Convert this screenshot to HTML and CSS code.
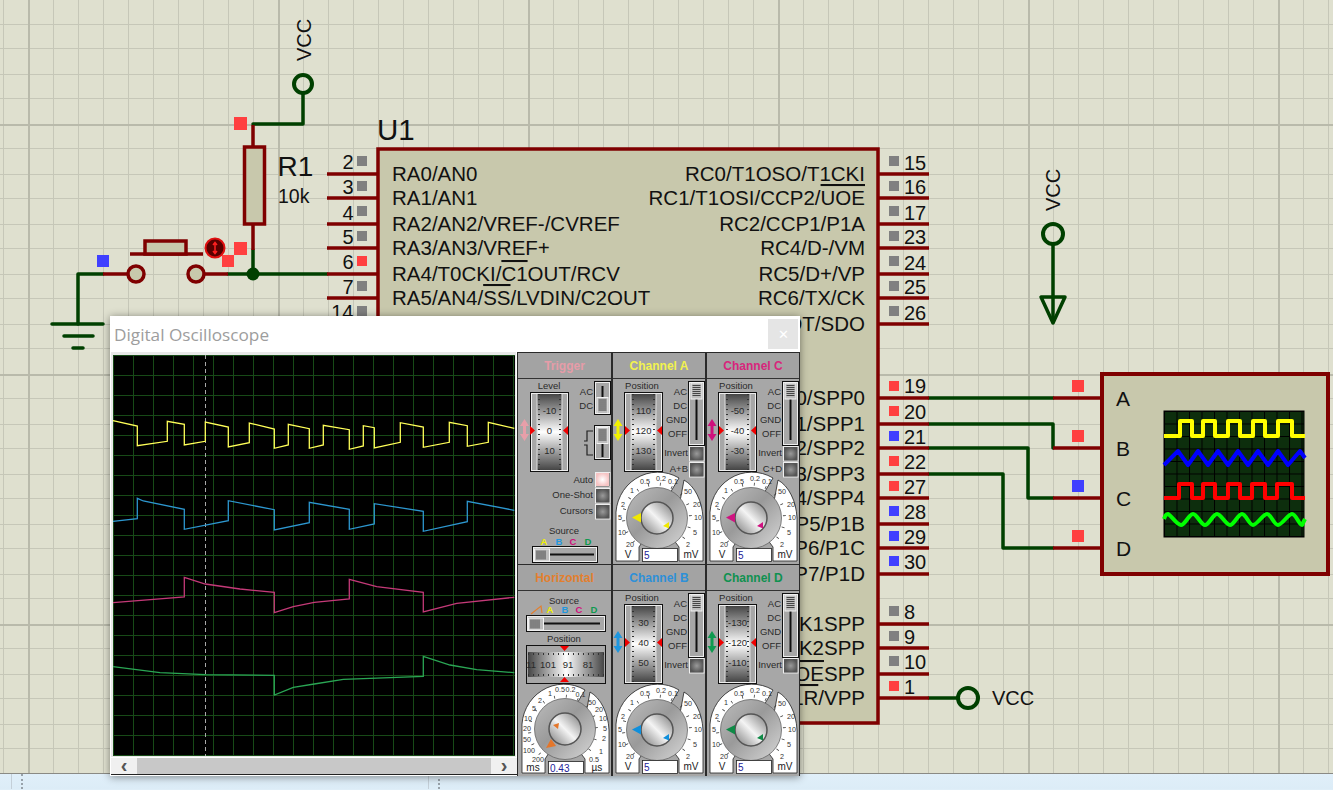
FILE: index.html
```html
<!DOCTYPE html>
<html lang="en">
<head>
<meta charset="utf-8">
<title>Digital Oscilloscope</title>
<link rel="stylesheet" href="styles.css">
</head>
<body>
<svg class="defs" aria-hidden="true">
  <defs>
    <linearGradient id="fadeV" x1="0" y1="0" x2="0" y2="1">
      <stop offset="0" stop-color="#454545"/><stop offset=".5" stop-color="#fff"/><stop offset="1" stop-color="#454545"/>
    </linearGradient>
    <linearGradient id="fadeH" x1="0" y1="0" x2="1" y2="0">
      <stop offset="0" stop-color="#454545"/><stop offset=".5" stop-color="#fff"/><stop offset="1" stop-color="#454545"/>
    </linearGradient>
    <linearGradient id="knobOuter" x1="0" y1="0" x2="1" y2="1">
      <stop offset="0" stop-color="#bdbdbd"/><stop offset=".45" stop-color="#9a9a9a"/><stop offset="1" stop-color="#d8d8d8"/>
    </linearGradient>
    <linearGradient id="knobCap" x1="0" y1="1" x2="1" y2="0">
      <stop offset="0" stop-color="#777"/><stop offset=".5" stop-color="#f4f4f4"/><stop offset="1" stop-color="#777"/>
    </linearGradient>
    <radialGradient id="btnDark">
      <stop offset="0" stop-color="#9a9a9a"/><stop offset="1" stop-color="#555"/>
    </radialGradient>
    <radialGradient id="btnPink">
      <stop offset="0" stop-color="#fff"/><stop offset="1" stop-color="#f6c4c4"/>
    </radialGradient>
    <pattern id="scopeGrid" patternUnits="userSpaceOnUse" x="113" y="355" width="20" height="20">
      <path class="scope-grid" d="M0 .5H20M.5 0V20"/>
    </pattern>
    <pattern id="miniGrid" patternUnits="userSpaceOnUse" x="1164" y="411" width="12.5" height="12.5">
      <path class="mini-grid" d="M0 .5H12.5M.5 0V12.5"/>
    </pattern>
    <g id="fader">
      <rect class="frame" x=".5" y=".5" width="38" height="79"/>
      <rect class="frame-w" x="1.5" y="1.5" width="36" height="77"/>
      <rect x="7" y="2" width="25" height="76" fill="url(#fadeV)"/>
      <path class="tick-d" d="M9 2V78M30 2V78"/>
      <path class="edge" d="M7 2V78M32 2V78"/>
    </g>
    <g id="thumbV">
      <rect class="thumb" x=".5" y=".5" width="11" height="16"/>
      <path class="thumb-line" d="M2 3H10M2 5H10M2 7H10M2 9H10M2 11H10M2 13H10"/>
    </g>
    <g id="thumbH">
      <rect class="thumb" x=".5" y=".5" width="15" height="12"/>
      <path class="thumb-line" d="M3 2V11M5 2V11M7 2V11M9 2V11M11 2V11"/>
    </g>
    <g id="btn">
      <rect class="frame-w" x=".5" y=".5" width="14.5" height="14.5"/>
      <rect x="1" y="1" width="13.500" height="13.500" fill="url(#btnDark)"/>
    </g>
    <g id="updown">
      <path fill="currentColor" d="M3 0 7.500 7H4.500V15H7.500L3 22-1.500 15H1.500V7H-1.500Z"/>
    </g>
    <g id="redTriR"><path class="red" d="M0 0 5 4.500 0 9Z"/></g>
    <g id="redTriL"><path class="red" d="M5 0 0 4.500 5 9Z"/></g>
    <g id="dial">
      <path class="dial" d="M3 182V139A42 43 0 0 1 66 99L60 109 28 165 26 168V182Z"/>
      <path class="dial" d="M71 101A30 44 0 0 1 90 139V182H66V168L60 160Z"/>
      <path class="dial-ticks" d="M21 163A33.500 33.500 0 1 1 67 163"/>
    </g>
    <g id="knob">
      <circle r="30.500" fill="url(#knobOuter)" class="knob-o"/>
      <circle r="16" fill="url(#knobCap)" class="knob-c"/>
    </g>
  </defs>
</svg>

<main class="canvas">
  <svg class="schem" viewBox="0 0 1333 773" width="1333" height="773">
    <!-- wires -->
    <path class="wire" d="M303 94V124H253"/>
    <path class="wire" d="M253 250V274H327"/>
    <path class="wire" d="M228 274H253"/>
    <path class="wire" d="M103 274H78V324"/>
    <path class="wire" d="M52 324H103M64 336H93M73 348H83"/>
    <circle class="node" cx="303" cy="84" r="9"/>
    <circle class="dot" cx="253" cy="274" r="6.500"/>
    <path class="wire" d="M929 398H1053M929 424H1053V448M929 448H1028V498H1053M929 474H1003V548H1053"/>
    <path class="wire" d="M1053 244V322"/>
    <circle class="node" cx="1053" cy="234" r="10"/>
    <path class="wire" d="M1041 297H1065L1053 323Z"/>
    <path class="wire" d="M929 698H958"/>
    <circle class="node" cx="968" cy="698" r="10"/>

    <!-- resistor and switch -->
    <path class="pin" d="M253 125V147M253 224V250"/>
    <rect class="body" x="244.500" y="147" width="20" height="77"/>
    <path class="pin" d="M103 274H128M205 274H228M130 254H203"/>
    <rect class="body" x="145" y="241" width="41" height="13"/>
    <circle class="contact" cx="136" cy="274" r="8"/>
    <circle class="contact" cx="196" cy="274" r="8"/>
    <circle class="probe" cx="215" cy="248" r="9.500"/>
    <path class="probe-i" d="M215 243V253M213 245 215 242.500 217 245M213 251 215 253.500 217 251"/>

    <!-- U1 pins -->
    <path class="pin" d="M327 174H378M327 198H378M327 224H378M327 248H378M327 274H378M327 298H378M327 324H378"/>
    <path class="pin" d="M878 174H929M878 198H929M878 224H929M878 248H929M878 274H929M878 298H929M878 324H929M878 398H929M878 424H929M878 448H929M878 474H929M878 498H929M878 524H929M878 548H929M878 574H929M878 624H929M878 648H929M878 674H929M878 698H929"/>
    <rect class="body chip" x="378" y="149" width="500" height="574"/>

    <!-- probes squares -->
    <rect class="sq red-sq" x="234" y="117" width="13" height="13"/>
    <rect class="sq red-sq" x="234" y="242" width="13" height="13"/>
    <rect class="sq red-sq" x="222" y="255" width="12" height="12"/>
    <rect class="sq blue-sq" x="97" y="255" width="12" height="12"/>
    <rect class="sq gray-sq" x="357" y="156" width="10" height="10"/>
    <rect class="sq gray-sq" x="357" y="181" width="10" height="10"/>
    <rect class="sq gray-sq" x="357" y="206" width="10" height="10"/>
    <rect class="sq gray-sq" x="357" y="231" width="10" height="10"/>
    <rect class="sq red-sq" x="357" y="256" width="10" height="10"/>
    <rect class="sq gray-sq" x="357" y="281" width="10" height="10"/>
    <rect class="sq gray-sq" x="357" y="306" width="10" height="10"/>
    <rect class="sq gray-sq" x="889" y="156" width="10" height="10"/>
    <rect class="sq gray-sq" x="889" y="181" width="10" height="10"/>
    <rect class="sq gray-sq" x="889" y="206" width="10" height="10"/>
    <rect class="sq gray-sq" x="889" y="231" width="10" height="10"/>
    <rect class="sq gray-sq" x="889" y="256" width="10" height="10"/>
    <rect class="sq gray-sq" x="889" y="281" width="10" height="10"/>
    <rect class="sq gray-sq" x="889" y="306" width="10" height="10"/>
    <rect class="sq red-sq" x="889" y="381" width="10" height="10"/>
    <rect class="sq red-sq" x="889" y="406" width="10" height="10"/>
    <rect class="sq blue-sq" x="889" y="431" width="10" height="10"/>
    <rect class="sq red-sq" x="889" y="456" width="10" height="10"/>
    <rect class="sq red-sq" x="889" y="481" width="10" height="10"/>
    <rect class="sq blue-sq" x="889" y="506" width="10" height="10"/>
    <rect class="sq blue-sq" x="889" y="531" width="10" height="10"/>
    <rect class="sq blue-sq" x="889" y="556" width="10" height="10"/>
    <rect class="sq gray-sq" x="889" y="606" width="10" height="10"/>
    <rect class="sq gray-sq" x="889" y="631" width="10" height="10"/>
    <rect class="sq gray-sq" x="889" y="656" width="10" height="10"/>
    <rect class="sq red-sq" x="889" y="681" width="10" height="10"/>

    <!-- texts -->
    <text class="t-big" x="377" y="140">U1</text>
    <text class="t-r1" x="277.500" y="176">R1</text>
    <text class="t-10k" x="278" y="203">10k</text>
    <text class="t-vcc" transform="translate(311 61) rotate(-90)">VCC</text>
    <text class="t-vcc" transform="translate(1060 211) rotate(-90)">VCC</text>
    <text class="t-vcc" x="992" y="705">VCC</text>

    <text class="t-num end" x="353.500" y="169">2</text>
    <text class="t-num end" x="353.500" y="194">3</text>
    <text class="t-num end" x="353.500" y="220">4</text>
    <text class="t-num end" x="353.500" y="244">5</text>
    <text class="t-num end" x="353.500" y="269">6</text>
    <text class="t-num end" x="353.500" y="294">7</text>
    <text class="t-num end" x="353.500" y="319">14</text>
    <text class="t-num" x="904" y="170">15</text>
    <text class="t-num" x="904" y="194">16</text>
    <text class="t-num" x="904" y="220">17</text>
    <text class="t-num" x="904" y="244">23</text>
    <text class="t-num" x="904" y="270">24</text>
    <text class="t-num" x="904" y="294">25</text>
    <text class="t-num" x="904" y="320">26</text>
    <text class="t-num" x="904" y="393">19</text>
    <text class="t-num" x="904" y="419">20</text>
    <text class="t-num" x="904" y="444">21</text>
    <text class="t-num" x="904" y="469">22</text>
    <text class="t-num" x="904" y="494">27</text>
    <text class="t-num" x="904" y="519">28</text>
    <text class="t-num" x="904" y="544">29</text>
    <text class="t-num" x="904" y="569">30</text>
    <text class="t-num" x="904" y="619">8</text>
    <text class="t-num" x="904" y="644">9</text>
    <text class="t-num" x="904" y="669">10</text>
    <text class="t-num" x="904" y="694">1</text>

    <text class="t-pin" x="392" y="181">RA0/AN0</text>
    <text class="t-pin" x="392" y="205">RA1/AN1</text>
    <text class="t-pin" x="392" y="231">RA2/AN2/VREF-/CVREF</text>
    <text class="t-pin" x="392" y="255">RA3/AN3/VREF+</text>
    <text class="t-pin" x="392" y="281">RA4/T0CKI/<tspan class="ol">C1</tspan>OUT/RCV</text>
    <text class="t-pin" x="392" y="305">RA5/AN4/<tspan class="ol">SS</tspan>/LVDIN/C2OUT</text>
    <text class="t-pin end" x="865" y="181">RC0/T1OSO/T1CKI</text>
    <text class="t-pin end" x="865" y="205">RC1/T1OSI/CCP2/<tspan class="ol">UOE</tspan></text>
    <text class="t-pin end" x="865" y="231">RC2/CCP1/P1A</text>
    <text class="t-pin end" x="865" y="255">RC4/D-/VM</text>
    <text class="t-pin end" x="865" y="281">RC5/D+/VP</text>
    <text class="t-pin end" x="865" y="305">RC6/TX/CK</text>
    <text class="t-pin end" x="865" y="331">DT/SDO</text>
    <text class="t-pin end" x="865" y="405">0/SPP0</text>
    <text class="t-pin end" x="865" y="431">1/SPP1</text>
    <text class="t-pin end" x="865" y="455">2/SPP2</text>
    <text class="t-pin end" x="865" y="481">3/SPP3</text>
    <text class="t-pin end" x="865" y="505">4/SPP4</text>
    <text class="t-pin end" x="865" y="531">P5/P1B</text>
    <text class="t-pin end" x="865" y="555">P6/P1C</text>
    <text class="t-pin end" x="865" y="581">P7/P1D</text>
    <text class="t-pin end" x="865" y="631">K1SPP</text>
    <text class="t-pin end" x="865" y="655">K2SPP</text>
    <text class="t-pin end" x="865" y="681"><tspan class="ol">OE</tspan>SPP</text>
    <text class="t-pin end" x="865" y="705"><tspan class="ol">LR</tspan>/VPP</text>

    <!-- scope symbol -->
    <path class="pin" d="M1053 398H1102M1053 448H1102M1053 498H1102M1053 548H1102"/>
    <rect class="body device" x="1102" y="374" width="226" height="200"/>
    <rect class="sq red-sq" x="1072" y="380" width="12" height="12"/>
    <rect class="sq red-sq" x="1072" y="430" width="12" height="12"/>
    <rect class="sq blue-sq" x="1072" y="480" width="12" height="12"/>
    <rect class="sq red-sq" x="1072" y="530" width="12" height="12"/>
    <text class="t-dev" x="1116" y="406">A</text>
    <text class="t-dev" x="1116" y="456">B</text>
    <text class="t-dev" x="1116" y="506">C</text>
    <text class="t-dev" x="1116" y="556">D</text>
    <rect class="mini" x="1164" y="411" width="140" height="126"/>
    <rect class="mini-g" x="1164" y="411" width="140" height="126" fill="url(#miniGrid)"/>
    <path class="mw mw-y" d="M1164 436H1180V421H1192V436H1203V421H1215V436H1228V421H1240V436H1253V421H1265V436H1278V421H1292V436H1305"/>
    <path class="mw mw-b" d="M1164 465 1178 451 1188 465 1198 451 1208 465 1218 451 1228 465 1238 451 1248 465 1258 451 1268 465 1278 451 1288 465 1300 451 1305 458"/>
    <path class="mw mw-r" d="M1164 498H1179V484H1192V498H1203V484H1215V498H1228V484H1240V498H1252V484H1265V498H1277V484H1292V498H1305"/>
    <path class="mw mw-g" d="M1164 519C1165 516 1166 514 1168 514S1177 525 1181 525S1189 514 1193 514S1201 525 1205 525S1213 514 1217 514S1226 525 1230 525S1238 514 1242 514S1249 525 1253 525S1263 514 1267 514S1274 525 1278 525S1288 514 1292 514S1299 525 1302 525L1305 519"/>
  </svg>
</main>

<footer class="status">
  <div class="pane pane-first"></div>
  <div class="pane pane-mid"><span class="grip"></span></div>
  <div class="pane pane-last"><span class="grip"></span></div>
</footer>

<section class="window">
  <header class="titlebar">
    <span class="title">Digital Oscilloscope</span>
    <span class="close">✕</span>
  </header>
  <div class="win-body">
    <div class="display">
      <svg class="screen" viewBox="111 352 405 405" width="405" height="405">
        <rect x="111" y="352" width="405" height="405" class="screen-edge"/>
        <rect x="113" y="355" width="402" height="401" class="screen-bg"/>
        <rect x="113" y="355" width="402" height="401" fill="url(#scopeGrid)"/>
        <path class="cursor" d="M205.500 355V756"/>
        <path class="tr tr-y" d="M113 420.700 137.300 426V445.700L167.300 441.300V421.300L184.300 424.300V445L205.300 441.300V422L228.300 427V447L249.300 442.700V423L274.300 429V448.300L288.300 445V424.300L309.300 428.700V448.300L323.300 445V425.300L349.300 429.700V449.300L363.300 446V425.700L374.300 427.700V448L400.300 442.300V422.700L423.300 427V447.300L449.300 442.300V422.300L467.300 425.700V446.300L488.300 442.300V422.300L514.300 428.300"/>
        <path class="tr tr-b" d="M113 521.300 137.300 518.700V498.300L143.300 501 184.300 509.300V529.300L228.300 520.700V500.700L274.300 509.700V530L309.300 522.700V502.300L349.300 509.300V529.300L374.300 524V503.700L423.300 511.300V531.300L467.300 521.700V501.300L514.300 510.300"/>
        <path class="tr tr-p" d="M113 602.700 184.300 597V577.300L205.300 584 240 589 274.300 592.300V612.700L293.300 606.700 314.300 602.300 349.300 599V579.300L376.700 586.700 423.300 592.300V612L456.700 603.300 514.300 597.300"/>
        <path class="tr tr-g" d="M113 666.700 160 672.700 205.300 674.700 274.300 675.300V695L293.300 687.300 314.300 684 343.300 679.300 423.300 676.300V656.300L450 665 476.700 669.700 514.300 672.700"/>
      </svg>
      <div class="scrollbar">
        <span class="arrow">‹</span>
        <span class="track"></span>
        <span class="arrow">›</span>
      </div>
    </div>
    <div class="panels">

      <article class="panel">
        <h2 class="ph ph-trig">Trigger</h2>
        <svg class="pb" viewBox="0 0 93 185" width="93" height="185">
          <text class="s mid" x="31" y="10">Level</text>
          <use href="#fader" x="12" y="13"/>
          <text class="s mid" x="31.500" y="35">-10</text>
          <text class="s mid" x="31.500" y="55">0</text>
          <text class="s mid" x="31.500" y="75">10</text>
          <use href="#redTriR" x="12" y="47"/>
          <use href="#redTriL" x="45" y="47"/>
          <use href="#updown" x="3.500" y="40" class="c-trig"/>
          <text class="s end" x="75" y="16">AC</text>
          <text class="s end" x="75" y="30">DC</text>
          <rect class="sw" x="77.500" y="3.500" width="14" height="31"/>
          <path class="track-v" d="M84.500 7V32"/>
          <use href="#thumbV" x="78.500" y="18"/>
          <rect class="sw" x="77.500" y="47.500" width="14" height="32"/>
          <path class="track-v" d="M84.500 50V78"/>
          <use href="#thumbV" x="78.500" y="48"/>
          <path class="edge-sym" d="M66 62H69V52H75M66 66H69V76H75"/>
          <use href="#btn" x="77" y="93"/>
          <rect x="78" y="94" width="13" height="13" fill="url(#btnPink)"/>
          <text class="s end" x="75" y="104">Auto</text>
          <use href="#btn" x="77" y="109"/>
          <text class="s end" x="75" y="119">One-Shot</text>
          <use href="#btn" x="77" y="125"/>
          <text class="s end" x="75" y="135">Cursors</text>
          <text class="s mid" x="46" y="155">Source</text>
          <text class="sb mid c-a" x="26" y="166">A</text>
          <text class="sb mid c-bl" x="41" y="166">B</text>
          <text class="sb mid c-c" x="55" y="166">C</text>
          <text class="sb mid c-d" x="70" y="166">D</text>
          <rect class="sw" x="15.500" y="168.500" width="63" height="14"/>
          <path class="track-h" d="M20 175.500H76"/>
          <use href="#thumbH" x="16" y="169.500"/>
        </svg>
      </article>

      <article class="panel">
        <h2 class="ph ph-a">Channel A</h2>
        <svg class="pb" viewBox="0 0 92 185" width="92" height="185">
          <text class="s mid" x="29" y="10">Position</text>
          <use href="#fader" x="11" y="13"/>
          <text class="s mid" x="30.500" y="35">110</text>
          <text class="s mid" x="30.500" y="55">120</text>
          <text class="s mid" x="30.500" y="75">130</text>
          <use href="#redTriR" x="12" y="47"/>
          <use href="#redTriL" x="44" y="47"/>
          <use href="#updown" x="2" y="40" class="c-a"/>
          <text class="s end" x="74" y="16">AC</text>
          <text class="s end" x="74" y="30">DC</text>
          <text class="s end" x="74" y="44">GND</text>
          <text class="s end" x="74" y="58">OFF</text>
          <rect class="sw" x="76.500" y="3.500" width="14" height="62"/>
          <path class="track-v" d="M83.500 8V61"/>
          <use href="#thumbV" x="77.500" y="3.500"/>
          <text class="s end" x="75" y="77">Invert</text>
          <use href="#btn" x="76" y="67"/>
          <text class="s end" x="75" y="93">A+B</text>
          <use href="#btn" x="76" y="83"/>
          <use href="#dial"/>
          <text class="d mid" x="32" y="105">0.5</text>
          <text class="d mid" x="48" y="102">0.2</text>
          <text class="d mid" x="60" y="105">0.1</text>
          <text class="d mid" x="19" y="114">1</text>
          <text class="d mid" x="10" y="128">2</text>
          <text class="d mid" x="7" y="141">5</text>
          <text class="d mid" x="9" y="156">10</text>
          <text class="d mid" x="17" y="168">20</text>
          <text class="d mid" x="75" y="115">50</text>
          <text class="d mid" x="84" y="128">20</text>
          <text class="d mid" x="85" y="141">10</text>
          <text class="d mid" x="82" y="156">5</text>
          <text class="d mid" x="75" y="168">2</text>
          <text class="u mid" x="15" y="179">V</text>
          <text class="u mid" x="78" y="179">mV</text>
          <use href="#knob" x="44" y="139"/>
          <path class="c-af" d="M19 138.500 28 134V143.500Z"/>
          <path class="c-af" d="M50 147 56 143V149.500Z"/>
          <rect class="box" x="29.500" y="169.500" width="35" height="13"/>
          <text class="val" x="31" y="180">5</text>
        </svg>
      </article>

      <article class="panel">
        <h2 class="ph ph-c">Channel C</h2>
        <svg class="pb" viewBox="0 0 92 185" width="92" height="185">
          <text class="s mid" x="29" y="10">Position</text>
          <use href="#fader" x="11" y="13"/>
          <text class="s mid" x="30.500" y="35">-50</text>
          <text class="s mid" x="30.500" y="55">-40</text>
          <text class="s mid" x="30.500" y="75">-30</text>
          <use href="#redTriR" x="12" y="47"/>
          <use href="#redTriL" x="44" y="47"/>
          <use href="#updown" x="2" y="40" class="c-c"/>
          <text class="s end" x="74" y="16">AC</text>
          <text class="s end" x="74" y="30">DC</text>
          <text class="s end" x="74" y="44">GND</text>
          <text class="s end" x="74" y="58">OFF</text>
          <rect class="sw" x="76.500" y="3.500" width="14" height="62"/>
          <path class="track-v" d="M83.500 8V61"/>
          <use href="#thumbV" x="77.500" y="3.500"/>
          <text class="s end" x="75" y="77">Invert</text>
          <use href="#btn" x="76" y="67"/>
          <text class="s end" x="75" y="93">C+D</text>
          <use href="#btn" x="76" y="83"/>
          <use href="#dial"/>
          <text class="d mid" x="32" y="105">0.5</text>
          <text class="d mid" x="48" y="102">0.2</text>
          <text class="d mid" x="60" y="105">0.1</text>
          <text class="d mid" x="19" y="114">1</text>
          <text class="d mid" x="10" y="128">2</text>
          <text class="d mid" x="7" y="141">5</text>
          <text class="d mid" x="9" y="156">10</text>
          <text class="d mid" x="17" y="168">20</text>
          <text class="d mid" x="75" y="115">50</text>
          <text class="d mid" x="84" y="128">20</text>
          <text class="d mid" x="85" y="141">10</text>
          <text class="d mid" x="82" y="156">5</text>
          <text class="d mid" x="75" y="168">2</text>
          <text class="u mid" x="15" y="179">V</text>
          <text class="u mid" x="78" y="179">mV</text>
          <use href="#knob" x="44" y="139"/>
          <path class="c-cf" d="M19 138.500 28 134V143.500Z"/>
          <path class="c-cf" d="M50 147 56 143V149.500Z"/>
          <rect class="box" x="29.500" y="169.500" width="35" height="13"/>
          <text class="val" x="31" y="180">5</text>
        </svg>
      </article>

      <article class="panel">
        <h2 class="ph ph-h">Horizontal</h2>
        <svg class="pb" viewBox="0 0 93 185" width="93" height="185">
          <text class="s mid" x="46" y="13">Source</text>
          <path class="ramp" d="M13 23 23 15 24 22"/>
          <text class="sb mid c-a" x="32" y="22">A</text>
          <text class="sb mid c-bl" x="47" y="22">B</text>
          <text class="sb mid c-c" x="61" y="22">C</text>
          <text class="sb mid c-d" x="76" y="22">D</text>
          <rect class="sw" x="9.500" y="25.500" width="77" height="14"/>
          <path class="track-h" d="M14 32.500H82"/>
          <use href="#thumbH" x="10" y="26.500"/>
          <text class="s mid" x="46" y="51">Position</text>
          <rect class="frame" x="8.500" y="54.500" width="79" height="38"/>
          <rect class="hfade" x="10" y="61" width="76" height="25"/>
          <path class="tick-h" d="M10 63H86M10 84H86"/>
          <text class="s mid" x="13" y="77">11</text>
          <text class="s mid" x="30" y="77">101</text>
          <text class="s mid" x="50" y="77">91</text>
          <text class="s mid" x="70" y="77">81</text>
          <path class="red" d="M42 55H51L46.500 60ZM42 91H51L46.500 86Z"/>
          <g class="dial-h"><use href="#dial"/></g>
          <text class="d mid" x="32" y="105">1</text>
          <text class="d mid" x="42" y="101">0.5</text>
          <text class="d mid" x="52.500" y="101">0.2</text>
          <text class="d mid" x="62.500" y="106">0.1</text>
          <text class="d mid" x="22" y="112">2</text>
          <text class="d mid" x="16" y="120">5</text>
          <text class="d mid" x="10" y="130">10</text>
          <text class="d mid" x="9" y="140">20</text>
          <text class="d mid" x="9" y="151">50</text>
          <text class="d mid" x="11" y="162">100</text>
          <text class="d mid" x="20" y="171">200</text>
          <text class="d mid" x="74" y="114">50</text>
          <text class="d mid" x="81" y="120.500">20</text>
          <text class="d mid" x="85" y="130">10</text>
          <text class="d mid" x="87" y="140">5</text>
          <text class="d mid" x="86" y="150">2</text>
          <text class="d mid" x="83" y="163">1</text>
          <text class="d mid" x="76" y="171">0.5</text>
          <text class="u mid" x="15" y="180">ms</text>
          <text class="u mid" x="79" y="180">µs</text>
          <use href="#knob" x="47" y="138"/>
          <path class="c-hf" d="M28 157 33 148 38 155Z"/>
          <path class="c-hf" d="M35 134 41 132 40 138Z"/>
          <rect class="box" x="30.500" y="170.500" width="35" height="12"/>
          <text class="val" x="32" y="180.500">0.43</text>
        </svg>
      </article>

      <article class="panel">
        <h2 class="ph ph-b">Channel B</h2>
        <svg class="pb" viewBox="0 0 92 185" width="92" height="185">
          <text class="s mid" x="29" y="10">Position</text>
          <use href="#fader" x="11" y="13"/>
          <text class="s mid" x="30.500" y="35">30</text>
          <text class="s mid" x="30.500" y="55">40</text>
          <text class="s mid" x="30.500" y="75">50</text>
          <use href="#redTriR" x="12" y="47"/>
          <use href="#redTriL" x="44" y="47"/>
          <use href="#updown" x="2" y="40" class="c-bl"/>
          <text class="s end" x="74" y="16">AC</text>
          <text class="s end" x="74" y="30">DC</text>
          <text class="s end" x="74" y="44">GND</text>
          <text class="s end" x="74" y="58">OFF</text>
          <rect class="sw" x="76.500" y="3.500" width="14" height="62"/>
          <path class="track-v" d="M83.500 8V61"/>
          <use href="#thumbV" x="77.500" y="3.500"/>
          <text class="s end" x="75" y="77">Invert</text>
          <use href="#btn" x="76" y="67"/>
          <use href="#dial"/>
          <text class="d mid" x="32" y="105">0.5</text>
          <text class="d mid" x="48" y="102">0.2</text>
          <text class="d mid" x="60" y="105">0.1</text>
          <text class="d mid" x="19" y="114">1</text>
          <text class="d mid" x="10" y="128">2</text>
          <text class="d mid" x="7" y="141">5</text>
          <text class="d mid" x="9" y="156">10</text>
          <text class="d mid" x="17" y="168">20</text>
          <text class="d mid" x="75" y="115">50</text>
          <text class="d mid" x="84" y="128">20</text>
          <text class="d mid" x="85" y="141">10</text>
          <text class="d mid" x="82" y="156">5</text>
          <text class="d mid" x="75" y="168">2</text>
          <text class="u mid" x="15" y="179">V</text>
          <text class="u mid" x="78" y="179">mV</text>
          <use href="#knob" x="44" y="139"/>
          <path class="c-bf" d="M19 138.500 28 134V143.500Z"/>
          <path class="c-bf" d="M50 147 56 143V149.500Z"/>
          <rect class="box" x="29.500" y="169.500" width="35" height="13"/>
          <text class="val" x="31" y="180">5</text>
        </svg>
      </article>

      <article class="panel">
        <h2 class="ph ph-d">Channel D</h2>
        <svg class="pb" viewBox="0 0 92 185" width="92" height="185">
          <text class="s mid" x="29" y="10">Position</text>
          <use href="#fader" x="11" y="13"/>
          <text class="s mid" x="30.500" y="35">-130</text>
          <text class="s mid" x="30.500" y="55">-120</text>
          <text class="s mid" x="30.500" y="75">-110</text>
          <use href="#redTriR" x="12" y="47"/>
          <use href="#redTriL" x="44" y="47"/>
          <use href="#updown" x="2" y="40" class="c-d"/>
          <text class="s end" x="74" y="16">AC</text>
          <text class="s end" x="74" y="30">DC</text>
          <text class="s end" x="74" y="44">GND</text>
          <text class="s end" x="74" y="58">OFF</text>
          <rect class="sw" x="76.500" y="3.500" width="14" height="62"/>
          <path class="track-v" d="M83.500 8V61"/>
          <use href="#thumbV" x="77.500" y="3.500"/>
          <text class="s end" x="75" y="77">Invert</text>
          <use href="#btn" x="76" y="67"/>
          <use href="#dial"/>
          <text class="d mid" x="32" y="105">0.5</text>
          <text class="d mid" x="48" y="102">0.2</text>
          <text class="d mid" x="60" y="105">0.1</text>
          <text class="d mid" x="19" y="114">1</text>
          <text class="d mid" x="10" y="128">2</text>
          <text class="d mid" x="7" y="141">5</text>
          <text class="d mid" x="9" y="156">10</text>
          <text class="d mid" x="17" y="168">20</text>
          <text class="d mid" x="75" y="115">50</text>
          <text class="d mid" x="84" y="128">20</text>
          <text class="d mid" x="85" y="141">10</text>
          <text class="d mid" x="82" y="156">5</text>
          <text class="d mid" x="75" y="168">2</text>
          <text class="u mid" x="15" y="179">V</text>
          <text class="u mid" x="78" y="179">mV</text>
          <use href="#knob" x="44" y="139"/>
          <path class="c-df" d="M19 138.500 28 134V143.500Z"/>
          <path class="c-df" d="M50 147 56 143V149.500Z"/>
          <rect class="box" x="29.500" y="169.500" width="35" height="13"/>
          <text class="val" x="31" y="180">5</text>
        </svg>
      </article>

    </div>
  </div>
</section>
</body>
</html>
```
FILE: styles.css
```css
* { box-sizing: border-box; }
html, body { margin: 0; height: 790px; overflow: hidden; }
body { position: relative; font-family: "Liberation Sans", Arial, sans-serif; background: #dfeef8; }
.defs { display: block; width: 0; height: 0; position: absolute; }

/* Schematic sheet */
.canvas {
  height: 774px;
  border-bottom: 1px solid #8a8a84;
  background-color: #dfe0cf;
  background-image:
    repeating-linear-gradient(90deg, transparent 0 28px, #b9baab 28px 30px, transparent 30px 250px),
    repeating-linear-gradient(180deg, transparent 0 124px, #b9baab 124px 126px, transparent 126px 250px),
    repeating-linear-gradient(90deg, transparent 0 3px, #c6c7b8 3px 4px, transparent 4px 25px),
    repeating-linear-gradient(180deg, transparent 0 24px, #c6c7b8 24px 25px, transparent 25px 48px, #c6c7b8 48px 49px, transparent 49px 50px);
}
.schem { display: block; }
.schem text { font-family: "Liberation Sans", Arial, sans-serif; fill: #111; }
.wire { fill: none; stroke: #004000; stroke-width: 3.5; stroke-linejoin: round; stroke-linecap: round; }
.node { fill: none; stroke: #004000; stroke-width: 4; }
.dot { fill: #004000; }
.pin { fill: none; stroke: #7f0000; stroke-width: 3.5; }
.body { fill: #c8c8ac; stroke: #7f0000; stroke-width: 3.5; }
.device { stroke-width: 4; }
.contact { fill: #c8c8ac; stroke: #7f0000; stroke-width: 3.5; }
.probe { fill: #5a0000; stroke: #e01010; stroke-width: 2; }
.probe-i { fill: none; stroke: #ff2020; stroke-width: 1.5; }
.red-sq { fill: #ff4040; }
.blue-sq { fill: #4040ff; }
.gray-sq { fill: #808080; }
.t-big { font-size: 29.500px; }
.t-r1 { font-size: 28px; }
.t-10k { font-size: 19.500px; }
.t-vcc { font-size: 20px; }
.t-num { font-size: 20px; }
.t-pin { font-size: 20.500px; }
.t-dev { font-size: 21px; }
.end { text-anchor: end; }
.mid { text-anchor: middle; }
.ol { text-decoration: overline; }
.mini { fill: #0d2e0d; stroke: #000; stroke-width: 1; }
.mini-grid { fill: none; stroke: #000; stroke-width: 1; }
.mw { fill: none; stroke-width: 4; stroke-linejoin: round; }
.mw-y { stroke: #ffff00; }
.mw-b { stroke: #0000ff; }
.mw-r { stroke: #ff0000; }
.mw-g { stroke: #00ff00; }

/* Status strip */
.status { display: flex; height: 15px; background: linear-gradient(#e0eff9, #dcecf7); }
.pane { height: 100%; border-right: 1px solid #c4cfd8; }
.pane-first { width: 12px; }
.pane-mid { width: 417px; padding-left: 9px; border-right: 1px solid #c4cfd8; }
.pane-last { flex: 1; padding-left: 9px; border-right: 0; }
.grip { display: block; width: 2px; height: 100%; border-left: 2px dotted #98a2aa; }

/* Oscilloscope window */
.window {
  position: absolute;
  left: 110px;
  top: 316px;
  width: 690px;
  height: 460px;
  display: flex;
  flex-direction: column;
  background: #fff;
  box-shadow: 0 1px 8px rgba(0, 0, 0, .45);
}
.titlebar { height: 36px; flex: none; display: flex; align-items: center; justify-content: space-between; padding: 0 2px 0 4px; }
.title { font-family: "Open Sans", "Noto Sans", sans-serif; font-size: 17.200px; color: #9d9d9d; }
.close { width: 30px; height: 30px; background: #e5e5e5; color: #fff; font-size: 13px; display: flex; align-items: center; justify-content: center; }
.win-body { flex: 1; display: flex; min-height: 0; }
.display { width: 406px; flex: none; margin-left: 1px; display: flex; flex-direction: column; }
.screen { display: block; flex: none; }
.screen-edge { fill: #e8e8e8; }
.screen-bg { fill: #000; }
.scope-grid { fill: none; stroke: #174a17; stroke-width: 1; }
.cursor { fill: none; stroke: #a8a8a8; stroke-width: 1; stroke-dasharray: 4 3; }
.tr { fill: none; stroke-width: 1.300; }
.tr-y { stroke: #ffff58; }
.tr-b { stroke: #2d97cf; }
.tr-p { stroke: #c43a78; }
.tr-g { stroke: #2aa654; }
.scrollbar { height: 18px; flex: none; display: flex; border-bottom: 1px solid #222; background: #f0f0f0; border-top: 1px solid #fff; }
.arrow { width: 26px; display: flex; align-items: center; justify-content: center; font-size: 20px; font-weight: bold; line-height: 1; color: #555; padding-bottom: 3px; }
.track { flex: 1; background: #c8c8c8; }

.panels {
  flex: 1;
  display: grid;
  grid-template-columns: 93px 92px 92px;
  grid-auto-rows: 211px;
  column-gap: 2px;
  row-gap: 1px;
  background: #2a2a2a;
  padding-top: 1px;
  padding-left: 1px;
  align-content: start;
}
.panel { display: flex; flex-direction: column; background: #a7a7a7; }
.ph {
  height: 26px;
  margin: 0;
  font-size: 12px;
  font-weight: bold;
  text-align: center;
  line-height: 27px;
  border-bottom: 1px solid #333;
  background: #a3a3a3;
}
.ph-trig { color: #e69ca8; }
.ph-a { color: #f2f24e; }
.ph-c { color: #d8267c; }
.ph-h { color: #e37f2e; }
.ph-b { color: #2e90d8; }
.ph-d { color: #0f9150; }
.pb { display: block; font-family: "Liberation Sans", Arial, sans-serif; }

.s { font-size: 9.500px; fill: #2a2a2a; }
.sb { font-size: 9.500px; font-weight: bold; }
.d { font-size: 7.200px; fill: #333; }
.u { font-size: 10px; fill: #222; }
.val { font-size: 10px; fill: #22229a; }
.c-a { fill: #f2f200; color: #f2f200; }
.c-bl { fill: #1f97df; color: #1f97df; }
.c-c { fill: #d0107c; color: #d0107c; }
.c-d { fill: #0f9a50; color: #0f9a50; }
.c-trig { color: #e79fa9; }
.c-af { fill: #f0e800; }
.c-cf { fill: #cf1380; }
.c-bf { fill: #0f8fdc; }
.c-df { fill: #0e8a46; }
.c-hf { fill: #e4762a; }
.frame { fill: none; stroke: #111; stroke-width: 1; }
.frame-w { fill: none; stroke: #eee; stroke-width: 1; }
.edge { fill: none; stroke: #ddd; stroke-width: 1; }
.tick-d { fill: none; stroke: #333; stroke-width: 2; stroke-dasharray: 1 4; }
.tick-h { fill: none; stroke: #333; stroke-width: 2; stroke-dasharray: 1 4; }
.hfade { fill: url(#fadeH); }
.red { fill: #f00000; }
.sw { fill: #a7a7a7; stroke: #eee; stroke-width: 1; outline: 1px solid #111; outline-offset: 0; }
.track-v, .track-h { fill: none; stroke: #111; stroke-width: 2; }
.thumb { fill: #bdbdbd; stroke: #f2f2f2; stroke-width: 1; }
.thumb-line { fill: none; stroke: #444; stroke-width: 1; }
.edge-sym { fill: none; stroke: #222; stroke-width: 1.200; }
.ramp { fill: none; stroke: #e37f2e; stroke-width: 1.200; }
.dial { fill: #fff; stroke: #222; stroke-width: .8; }
.dial-ticks { fill: none; stroke: #444; stroke-width: 3; stroke-dasharray: .8 11; }
.dial-h { transform: translate(1px, 0); }
.knob-o { stroke: #666; stroke-width: .8; }
.knob-c { stroke: #555; stroke-width: 1.500; }
.box { fill: #fff; stroke: #222; stroke-width: .8; }
```
